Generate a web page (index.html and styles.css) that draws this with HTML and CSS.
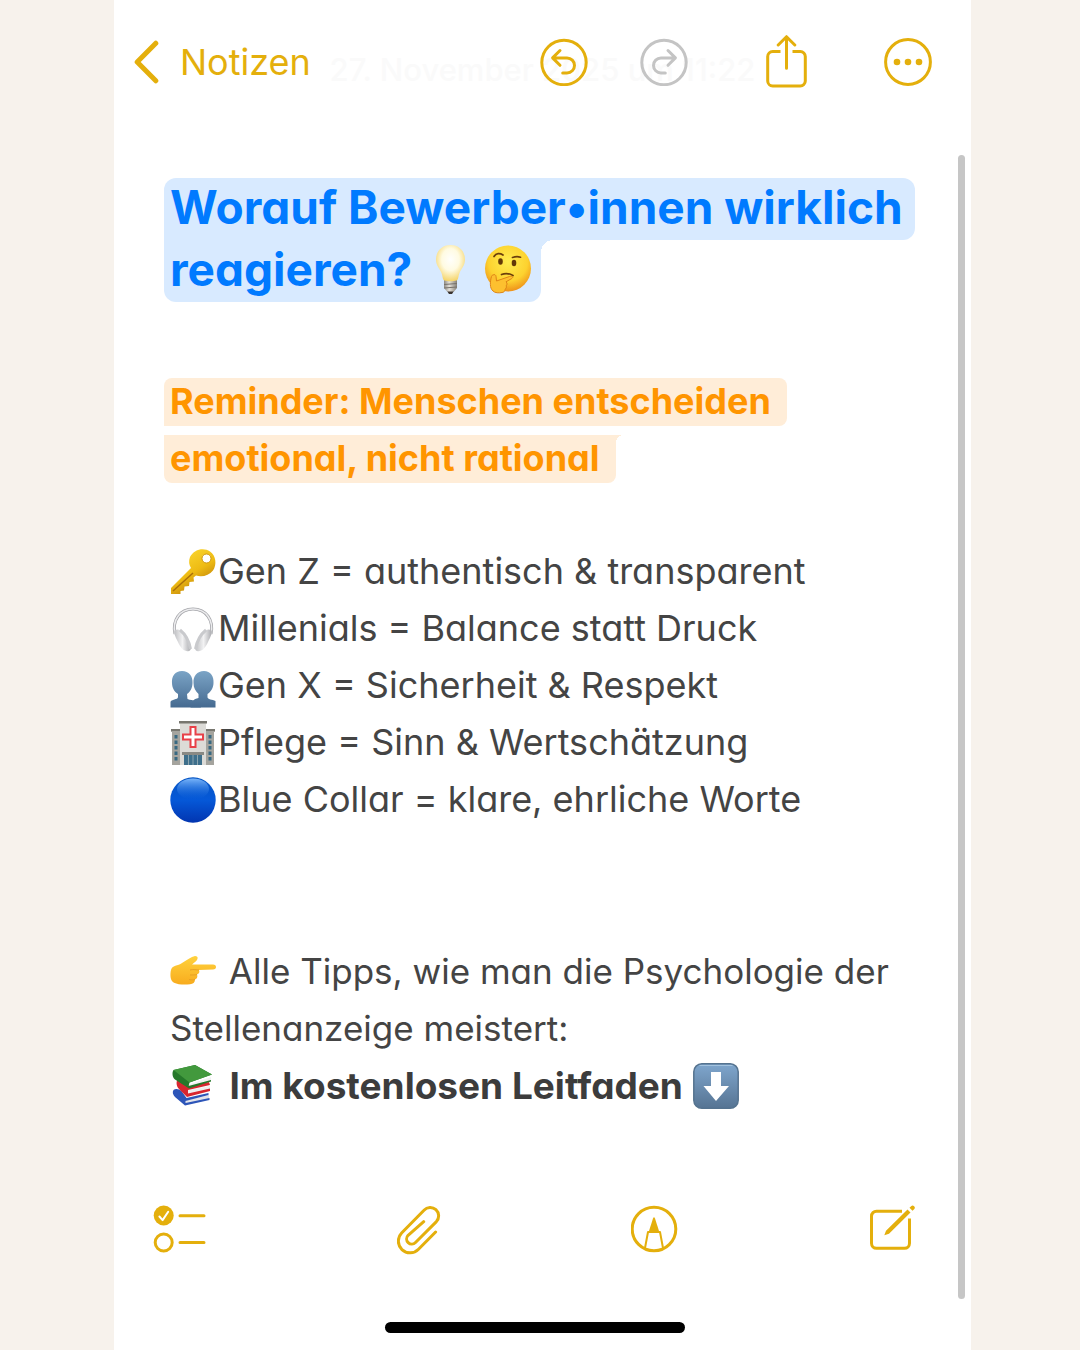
FILE: index.html
```html
<!DOCTYPE html>
<html lang="de">
<head>
<meta charset="utf-8">
<meta name="viewport" content="width=device-width, initial-scale=1">
<title>Notizen</title>
<link rel="stylesheet" href="styles.css">
</head>
<body>
<div class="phone">
  <header class="topbar">
    <p class="date">27. November 2025 um 11:22</p>
    <a class="back" href="#">
      <svg class="icon" width="26" height="44" viewBox="0 0 26 44"><path class="thick" d="M21.800 3.200 3.200 22l18.600 18.800"/></svg>
      <span>Notizen</span>
    </a>
    <div class="actions">
      <div class="history">
        <button type="button" aria-label="Widerrufen">
          <svg class="icon" width="48" height="48" viewBox="0 0 48 48"><circle cx="24" cy="24.500" r="22.200"/><path d="M22.700 34.900H27a7.500 7.500 0 0 0 0-15H13M20 12.500l-7.400 7.400 7.400 7.400"/></svg>
        </button>
        <button type="button" class="muted" aria-label="Wiederholen">
          <svg class="icon" width="48" height="48" viewBox="0 0 48 48"><circle cx="24" cy="24.500" r="22.200"/><path d="M25.300 34.900H21a7.500 7.500 0 0 1 0-15h14M28 12.500l7.400 7.400-7.400 7.400"/></svg>
        </button>
      </div>
      <button type="button" aria-label="Teilen">
        <svg class="icon" width="42" height="54" viewBox="0 0 42 54"><path class="butt" d="M15.500 16.500H7.700a5 5 0 0 0-5 5v24.500a5 5 0 0 0 5 5h27.600a5 5 0 0 0 5-5V21.500a5 5 0 0 0-5-5H27.500"/><path d="M21.500 33.300V2.100M13.200 10l8.300-8.300 8.300 8.300"/></svg>
      </button>
      <button type="button" aria-label="Mehr">
        <svg class="icon" width="48" height="48" viewBox="0 0 48 48"><circle cx="24" cy="24" r="22.400"/><g class="solid"><circle cx="13" cy="24" r="3.300"/><circle cx="24" cy="24" r="3.300"/><circle cx="35" cy="24" r="3.300"/></g></svg>
      </button>
    </div>
  </header>

  <main class="note">
    <h1 class="title">
      <span class="line">Worauf Bewerber•innen wirklich</span>
      <span class="line">reagieren?
        <span class="pair">
        <svg class="emoji" role="img" aria-label="Glühbirne" viewBox="0 0 48 48">
          <defs>
            <radialGradient id="glass" cx=".5" cy=".4" r=".6"><stop offset="0" stop-color="#fffffc"/><stop offset=".5" stop-color="#fffbe2"/><stop offset="1" stop-color="#f5d469"/></radialGradient>
            <linearGradient id="cap"><stop offset="0" stop-color="#8d8982"/><stop offset=".4" stop-color="#e4e1da"/><stop offset="1" stop-color="#858078"/></linearGradient>
          </defs>
          <path d="M20 46h7l-2 3h-3z" fill="#39332f"/><path d="M17 35h13v8l-3 3.500h-7L17 43z" fill="url(#cap)"/><path d="M17 39.500l13-1M17 43l13-1" stroke="#77726b"/>
          <path d="M23.500 0C14.500 0 9 6.500 9 14.500c0 6 3.500 9 5.500 13.500 1.200 3 1 7 3 7.600 3 1 9 1 12 0 2-.6 1.800-4.600 3-7.600C34.500 23.500 38 20.500 38 14.500 38 6.500 32.500 0 23.500 0z" fill="url(#glass)"/>
        </svg>
        <svg class="emoji" role="img" aria-label="Nachdenkliches Gesicht" viewBox="0 0 48 48">
          <defs><radialGradient id="face" cx=".5" cy=".35" r=".65"><stop offset="0" stop-color="#ffec4f"/><stop offset=".65" stop-color="#fdd22f"/><stop offset="1" stop-color="#ee9119"/></radialGradient></defs>
          <circle cx="24" cy="23.500" r="23" fill="url(#face)"/>
          <g fill="none" stroke="#6b3f0c" stroke-width="1.700" stroke-linecap="round"><path d="M10 11.500c2-3.500 6-3.500 9-1.500M28.500 12.500c3-1 5.500-1 8-.3M17.500 29.500c4-1.500 8-1 11.500 1"/></g>
          <ellipse cx="16.500" cy="16.500" rx="2.300" ry="3.300" fill="#633808"/><ellipse cx="30" cy="18" rx="2.300" ry="3.300" fill="#633808"/>
          <path d="M9 30c1.500-1 3 0 3 1.500l.5 4.500 13-4.500c3.500-1 4.200 1 1.800 2.300l-5.300 3c1.500 1.500 1.200 3 .2 4 .6 1.500-.2 3-1.200 3.500 0 2-1 3-3 3.200-3 .6-7 .6-9-1.500C5.500 43 6 37 7.500 31.500c.3-1 .8-1.300 1.500-1.500z" fill="#fdc02f" stroke="#df8516" stroke-width="1"/>
        </svg>
        </span>
      </span>
    </h1>

    <p class="reminder">
      <strong class="line">Reminder: Menschen entscheiden</strong>
      <strong class="line">emotional, nicht rational</strong>
    </p>

    <ul class="groups">
      <li>
        <svg class="emoji" role="img" aria-label="Schlüssel" viewBox="0 0 46 46">
          <defs><linearGradient id="gold" x1="0" y1="0" x2=".6" y2="1"><stop offset="0" stop-color="#ffe13a"/><stop offset=".6" stop-color="#eebb13"/><stop offset="1" stop-color="#b87909"/></linearGradient></defs>
          <path fill="url(#gold)" d="M20 8C24 0 34-2 40 2.500c6 4 7 13 3 19-4 5-11 7-17 5l-2.500 2 .5 4-4.500.5-.5 4-4.500.5-.5 4-3.500.5V45H1v-6l20-20c-2-3-2.500-7-1-11z"/><path d="M3 42 23 24" stroke="#a96f0b" stroke-width="1.500"/><circle cx="36.500" cy="9.500" r="4.500" fill="#fff" stroke="#cf9811"/>
        </svg>
        <span>Gen Z = authentisch &amp; transparent</span>
      </li>
      <li>
        <svg class="emoji" role="img" aria-label="Kopfhörer" viewBox="0 0 46 46">
          <defs><linearGradient id="cup"><stop offset="0" stop-color="#bfc0c3"/><stop offset=".5" stop-color="#f2f2f3"/><stop offset="1" stop-color="#a9aaae"/></linearGradient></defs>
          <path d="M5 28C2 14 10 3 23 3s21 11 18 25" fill="none" stroke="#a5a6aa" stroke-width="3"/><path d="M5 28C2 14 10 3 23 3s21 11 18 25" fill="none" stroke="#ececee" stroke-width="1.500"/>
          <path d="M5 24c4-2 8 1 12 9 4 7 5 11 2 12-4 1-8-2-11-9-3-6-5-10-3-12z" fill="url(#cup)"/><path d="M41 24c-4-2-8 1-12 9-4 7-5 11-2 12 4 1 8-2 11-9 3-6 5-10 3-12z" fill="url(#cup)"/>
          <path d="M10 24c5 4 9 11 10.500 19M36 24c-5 4-9 11-10.500 19" stroke="#c9cacd" stroke-width="3" fill="none"/>
        </svg>
        <span>Millenials = Balance statt Druck</span>
      </li>
      <li>
        <svg class="emoji" role="img" aria-label="Zwei Personen" viewBox="0 0 46 46">
          <defs><linearGradient id="bust" x1="0" y1="0" x2="0" y2="1"><stop offset="0" stop-color="#7ba4c6"/><stop offset="1" stop-color="#456a90"/></linearGradient></defs>
          <path fill="url(#bust)" d="M34 8c-7 0-11 5-10.500 12 0 5 2 8 5 11v4c-5 1-7 3-8 9.500h25V38c-3-2-8-1-8-4v-3c3-2 6-6 6-11 .5-7-3-12-9.500-12z"/>
          <path fill="url(#bust)" d="M12 8C5 8 1.500 13 2 20c0 4 2 9 6 11v3c0 3-7 2-7.500 5v5.500H31C29 37 23 38 17.500 36l-.5-5c3-2 5.500-6 5.500-11 .5-7-3.500-12-10.500-12z"/>
        </svg>
        <span>Gen X = Sicherheit &amp; Respekt</span>
      </li>
      <li>
        <svg class="emoji" role="img" aria-label="Krankenhaus" viewBox="0 0 46 46">
          <path d="M1 10h12v35H2V12H1zM33 10h12v2h-1v33H33z" fill="#a5a49e"/><path d="M10 2h26v43H10z" fill="#dcdbd7"/><path d="M9 1h28v2.500H9zM1 9h9v2H1zM36 9h9v2h-9z" fill="#77766f"/>
          <path d="M6 15v27M40 15v27" stroke="#386982" stroke-width="3" stroke-dasharray="3.500 2"/>
          <path d="M20.500 7h5v7.500H33v5h-7.500V27h-5v-7.500H13v-5h7.500z" fill="#fff" stroke="#e84149" stroke-width="2"/>
          <path d="M12 32h22v3H12z" fill="#898984"/><path d="M14 35h18v10H14z" fill="#3e6f8b"/><path d="M18.500 35v10M23 35v10M27.500 35v10" stroke="#8ba5af"/>
        </svg>
        <span>Pflege = Sinn &amp; Wertschätzung</span>
      </li>
      <li>
        <svg class="emoji" role="img" aria-label="Blauer Kreis" viewBox="0 0 46 46">
          <defs><linearGradient id="ball" x1="0" y1="0" x2="0" y2="1"><stop offset="0" stop-color="#0756c4"/><stop offset=".5" stop-color="#0558d8"/><stop offset="1" stop-color="#0235b0"/></linearGradient><linearGradient id="shine" x1="0" y1="0" x2="0" y2="1"><stop offset="0" stop-color="#79b5fa"/><stop offset="1" stop-color="#1264dc" stop-opacity="0"/></linearGradient></defs>
          <circle cx="23" cy="23" r="22.700" fill="url(#ball)"/><ellipse cx="23" cy="12" rx="16" ry="10.500" fill="url(#shine)"/>
        </svg>
        <span>Blue Collar = klare, ehrliche Worte</span>
      </li>
    </ul>

    <div class="closing">
      <p>
        <svg class="emoji" role="img" aria-label="Zeigefinger nach rechts" viewBox="0 0 46 46">
          <defs><linearGradient id="skin" x1="0" y1="0" x2="0" y2="1"><stop offset="0" stop-color="#ffd23d"/><stop offset="1" stop-color="#f8ac1e"/></linearGradient></defs>
          <path fill="url(#skin)" d="M1 22c1-5 7-4 11-7 5-3 9-6 13-7 4 0 3 4 0 6l-3 2.500h21c4 0 4 5 0 5L29 22c1 2 0 4-2 4.500 1 2 0 4.500-2 5 0 3-2 4.500-5 4.700-5 .5-12 .5-16-1.500C0 33 0 26 1 22z"/>
          <path d="M20 22c4-1 6 0 9 0M20 27c3 0 5 0 7-.5M19 31.500c3 .5 4 .5 6 0" fill="none" stroke="#e9a023" stroke-width="1"/>
        </svg>
        Alle Tipps, wie man die Psychologie der Stellenanzeige meistert:
      </p>
      <p class="offer">
        <svg class="emoji" role="img" aria-label="Bücher" viewBox="0 0 46 46">
          <path d="M4 30l10 8 25-6v4.500L15 42z" fill="#e3e4ea"/><path d="M3.500 27c2-2 6-1 8 1l5 7 22-5v2l-23 6v2l24-5v2L15 42.500 5 34c-2-2-3-5-1.500-7z" fill="#2d55b8"/>
          <path d="M10 17l8 10 22-4v5l-22 5z" fill="#f0efef"/><path d="M8 16l12 6 19-3 1 3-22 5v3.500l22-5v2.500l-23 6-8-8c-3-3-3-8-1-10z" fill="#d8262f"/>
          <path d="M6 9l14 12 21-7v4l-21 6z" fill="#f2f2f2"/><path d="M3.500 7 25 2l17 9.500-22.500 8-1 3.500 22.500-6v1.500L19 25.500 5 16.500C2 14 2 9 3.500 7z" fill="#25782a"/><path d="M3.500 7 25 2l17 9.500-22.500 8z" fill="#42993d"/>
        </svg>
        <strong>Im kostenlosen Leitfaden</strong>
        <svg class="emoji" role="img" aria-label="Pfeil nach unten" viewBox="0 0 46 46">
          <defs><linearGradient id="key" x1="0" y1="0" x2="0" y2="1"><stop offset="0" stop-color="#7fa6cd"/><stop offset="1" stop-color="#567493"/></linearGradient></defs>
          <rect x=".8" y=".8" width="44.400" height="44.400" rx="8" fill="url(#key)" stroke="#55738f" stroke-width="1.500"/><path d="M7 2.500h32" stroke="#a2c2de" stroke-linecap="round"/><path d="M18 9h10v14h8L23 38 10.500 23H18z" fill="#fff"/>
        </svg>
      </p>
    </div>
  </main>

  <footer class="toolbar">
    <button type="button" aria-label="Checkliste">
      <svg class="icon" width="54" height="50" viewBox="0 0 54 50"><circle class="solid" cx="10.700" cy="10.500" r="10"/><path class="check" d="M6.400 11.500l3.200 3.600 5.600-8.300"/><circle cx="10.700" cy="37.500" r="8.500"/><path d="M27 10.700h24M27 37.500h24"/></svg>
    </button>
    <button type="button" aria-label="Anhang">
      <svg class="icon" width="45" height="50" viewBox="0 0 45 50"><path d="M38.600 27 21.500 44.200A11.700 11.700 0 0 1 4.600 28L27 5.200A8.300 8.300 0 0 1 39.400 16.600L18.500 37.500a5 5 0 0 1-7.400-7.200L26.700 16.700"/></svg>
    </button>
    <button type="button" aria-label="Markierung">
      <svg class="icon" width="48" height="50" viewBox="0 0 48 50"><circle cx="23" cy="24" r="21.800"/><path class="thin" d="M14 43l3-16h12l3 16"/><path class="solid" d="M17.500 27.500 22 13.500q1-2.300 2 0l4.500 14z"/></svg>
    </button>
    <button type="button" aria-label="Neue Notiz">
      <svg class="icon" width="46" height="50" viewBox="0 0 46 50"><path class="butt" d="M33 6.200H7.500a5 5 0 0 0-5 5v27.100a5 5 0 0 0 5 5h28a5 5 0 0 0 5-5V13.500"/><path class="solid" d="M38.500 4.500l3 3L20 28.800l-4.700 1.500 1.700-4.600zM40.500 2.700l1.600-1.500a2 2 0 0 1 3 3l-1.600 1.500z"/></svg>
    </button>
  </footer>
  <div class="home"></div>
  <div class="scrollbar"></div>
</div>
</body>
</html>
```
FILE: styles.css
```css
* { box-sizing: border-box; }

body {
  margin: 0;
  padding: 0 109px 0 114px;
  background: #f7f2ec;
  color: #444;
  font-family: Inter, "Liberation Sans", sans-serif;
  font-size: 36px;
  line-height: 57px;
  font-feature-settings: "cv11";
}

h1, p, ul { margin: 0; padding: 0; }
ul { list-style: none; }

button {
  display: flex;
  padding: 0;
  border: 0;
  background: none;
  color: inherit;
}

.phone {
  position: relative;
  display: flex;
  flex-direction: column;
  min-height: 100vh;
  background: #fff;
}

.icon {
  display: block;
  fill: none;
  stroke: currentColor;
  stroke-width: 3;
  stroke-linecap: round;
  stroke-linejoin: round;
}
.icon .thick { stroke-width: 5; }
.icon .thin { stroke-width: 2; }
.icon .butt { stroke-linecap: butt; }
.icon .solid { fill: currentColor; stroke: none; }
.icon .check { stroke: #fff; stroke-width: 2; }

.topbar {
  position: relative;
  display: flex;
  align-items: center;
  justify-content: space-between;
  height: 124px;
  padding: 0 39px 0 20px;
  color: #e4af0c;
}

/* Creation date, fading out beneath the bar */
.date {
  position: absolute;
  inset: 41px 0 auto;
  color: #fafafa;
  font-size: 31px;
  font-weight: 500;
  text-align: center;
}

.back {
  position: relative;
  display: flex;
  align-items: center;
  gap: 20px;
  color: inherit;
  text-decoration: none;
}

.actions {
  position: relative;
  display: flex;
  align-items: center;
  gap: 77px;
}
.history { display: flex; gap: 52px; }
.muted { color: #c4c4c4; }

.note {
  flex: 1;
  padding: 54px 50px 0;
}

.emoji {
  flex: none;
  width: 46px;
  height: 46px;
  overflow: visible;
}

.line {
  position: relative;
  display: flex;
  align-items: center;
  width: fit-content;
  padding: 0 6px;
  white-space: nowrap;
}

/* Inner corner where the shorter second line meets the first */
.line:last-child::after {
  content: "";
  position: absolute;
  top: 0;
  left: 100%;
  width: var(--radius);
  height: var(--radius);
  background: radial-gradient(circle at 100% 100%, transparent var(--radius), var(--mark) var(--radius));
}

.title {
  --radius: 12px;
  --mark: #d8eaff;
  color: #007aff;
  font-size: 46px;
  font-weight: 700;
  line-height: 58px;
}
.title .line {
  height: 62px;
  padding-right: 12px;
  padding-bottom: 4px;
  background: var(--mark);
}
.title .line:first-child { border-radius: 12px 12px 12px 0; }
.title .line:last-child {
  gap: 15px;
  padding-right: 9px;
  border-radius: 0 0 12px 12px;
}
.pair { display: flex; gap: 9px; }
.title .emoji { width: 48px; height: 48px; }

.reminder {
  --radius: 8px;
  --mark: #ffedd8;
  display: grid;
  gap: 9px;
  margin-top: 76px;
  color: #ff9500;
  line-height: 46px;
}
.reminder .line {
  height: 48px;
  padding-right: 16px;
  padding-bottom: 2px;
  background: var(--mark);
}
.reminder .line:first-child { border-radius: 8px 8px 8px 0; }
.reminder .line:last-child { border-radius: 0 0 8px 8px; }

.groups { margin-top: 60px; padding-left: 6px; }
.groups li {
  display: flex;
  align-items: center;
  gap: 2px;
}

.closing {
  margin-top: 115px;
  padding-left: 6px;
  font-size: 35px;
}
.closing .emoji { margin-right: 3px; vertical-align: -10px; }
.offer { font-size: 37px; }
.offer strong { color: #3c3c3c; }

.toolbar {
  display: flex;
  justify-content: space-between;
  padding: 0 56px 0 39px;
  color: #e4af0c;
}

.home {
  width: 300px;
  height: 11px;
  margin: 67px 0 17px calc(50% - 158px);
  border-radius: 6px;
  background: #000;
}

.scrollbar {
  position: absolute;
  top: 155px;
  right: 6px;
  bottom: 51px;
  width: 7px;
  border-radius: 4px;
  background: #c6c6c6;
}
```
